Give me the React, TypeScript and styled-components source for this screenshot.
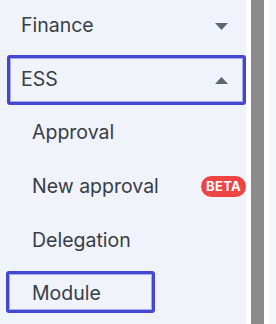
import * as React from 'react';
import styled, { createGlobalStyle } from 'styled-components';

const GlobalStyle = createGlobalStyle`
    html, body {
        margin: 0;
        padding: 0;
        background: #f6f7fb;
    }
    body {
        font-family: Inter, "Noto Sans", sans-serif;
    }
`;

export const Page = styled.div`
    display: flex;
    width: 276px;
    height: 324px;
    overflow: hidden;
`;

export const Sidebar = styled.nav`
    width: 246px;
    flex-shrink: 0;
    background-color: #f0f3f9;
    display: flex;
    flex-direction: column;
    overflow: hidden;
`;

export const ScrollTrack = styled.div`
    width: 13px;
    flex-shrink: 0;
    padding: 0 5px;
    background-color: #ffffff;
    display: flex;
`;

export const ScrollThumb = styled.div`
    flex: 1;
    background-color: #8b8b8b;
`;

export const Rest = styled.div`
    flex: 1;
    background-color: #f6f7fb;
`;

export const GroupRow = styled.div<{ $focused?: boolean }>`
    display: flex;
    align-items: center;
    justify-content: space-between;
    box-sizing: border-box;
    height: ${p => (p.$focused ? '50px' : '48px')};
    margin: ${p => (p.$focused ? '7px 0 0 7px' : '0')};
    padding: ${p => (p.$focused ? '0 15px 0 11px' : '4px 18px 0 21px')};
    border: ${p => (p.$focused ? '3px solid #4347cf' : 'none')};
    border-radius: 3px;
    box-shadow: ${p => (p.$focused ? 'inset 0 0 0 1px rgba(120, 124, 222, 0.6)' : 'none')};
`;

export const Label = styled.span`
    font-size: 19.5px;
    color: #383d46;
    line-height: 1;
`;

export const SubRow = styled.div<{ $focused?: boolean }>`
    display: flex;
    align-items: center;
    justify-content: space-between;
    box-sizing: border-box;
    height: ${p => (p.$focused ? '42px' : '54px')};
    width: ${p => (p.$focused ? '149px' : 'auto')};
    margin: ${p => (p.$focused ? '4px 0 0 6px' : '0')};
    padding: ${p => (p.$focused ? '4px 0 0 23px' : '2px 0 0 32px')};
    border: ${p => (p.$focused ? '3px solid #4347cf' : 'none')};
    border-radius: 3px;
    box-shadow: ${p => (p.$focused ? 'inset 0 0 0 1px rgba(120, 124, 222, 0.6)' : 'none')};
`;

export const Badge = styled.span`
    display: inline-flex;
    align-items: center;
    justify-content: center;
    width: 45px;
    height: 21px;
    margin-top: -2px;
    border-radius: 11px;
    background-color: #ef4444;
    color: #ffffff;
    font-size: 13px;
    font-weight: 700;
    letter-spacing: 0.3px;
`;

const Caret = ({ up }: { up?: boolean }) => (
    <svg width="13" height="7" viewBox="0 0 13 7">
        <polygon points={up ? '0,7 13,7 6.5,0' : '0,0 13,0 6.5,7'} fill="#5e6673" />
    </svg>
);

const subItems = [
    { label: 'Approval' },
    { label: 'New approval', badge: 'BETA' },
    { label: 'Delegation' },
];

export default function App() {
    return (
        <Page>
            <GlobalStyle />
            <Sidebar>
                <GroupRow>
                    <Label>Finance</Label>
                    <Caret />
                </GroupRow>
                <GroupRow $focused>
                    <Label>ESS</Label>
                    <Caret up />
                </GroupRow>
                {subItems.map(item => (
                    <SubRow key={item.label}>
                        <Label>{item.label}</Label>
                        {item.badge && <Badge>{item.badge}</Badge>}
                    </SubRow>
                ))}
                <SubRow $focused>
                    <Label>Module</Label>
                </SubRow>
            </Sidebar>
            <ScrollTrack>
                <ScrollThumb />
            </ScrollTrack>
            <Rest />
        </Page>
    );
}
